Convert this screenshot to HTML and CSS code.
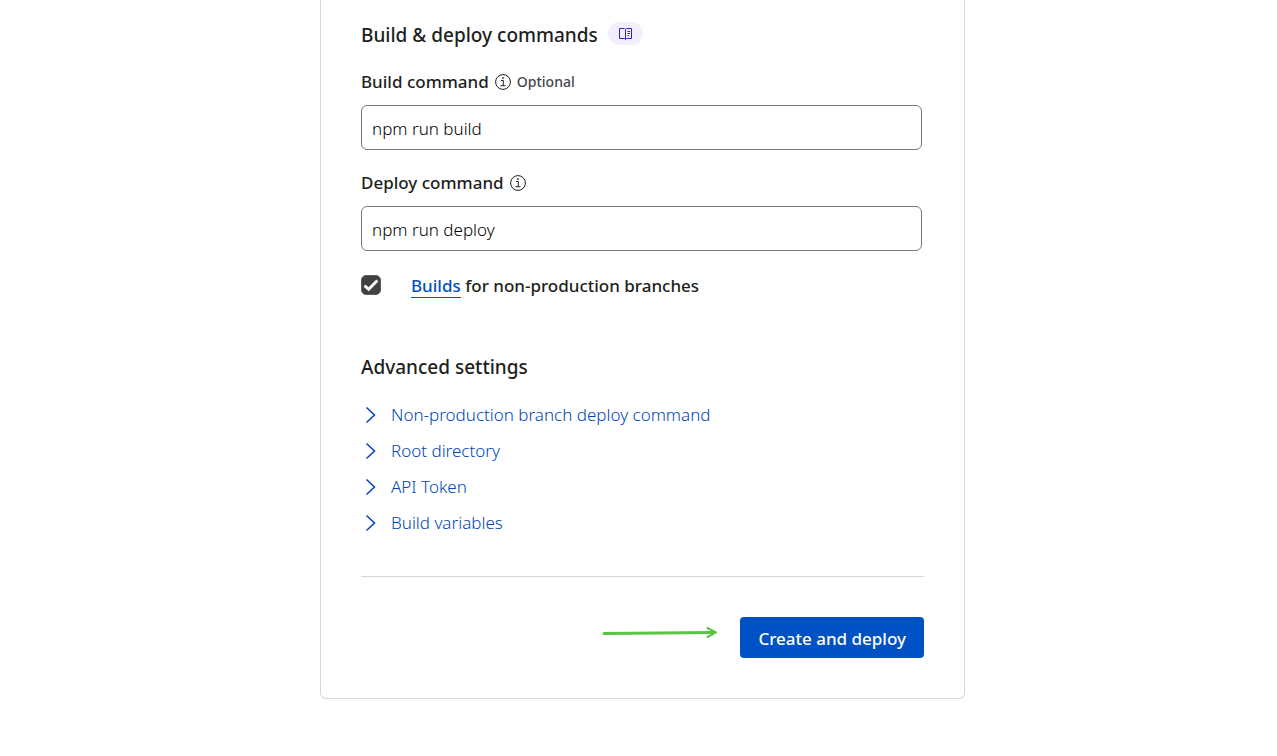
FILE: index.html
```html
<!DOCTYPE html>
<html lang="en">
<head>
    <meta charset="UTF-8">
    <meta name="viewport" content="width=device-width, initial-scale=1.0">
    <title>Create application</title>
    <link rel="stylesheet" href="styles.css">
</head>
<body>

    <form class="card">
        <div class="heading">
            <h2>Build &amp; deploy commands</h2>
            <a href="#docs" class="docs-badge" aria-label="Documentation">
                <svg width="13" height="13" viewBox="0 0 13 13" fill="none" stroke="currentColor">
                    <path d="M.5 1.500h5l1 1 1-1h5v10h-5l-1 1-1-1h-5zM6.500 2.500v10M8.500 4.500h2.500M8.500 6.500h2.500M8.500 8.500h1.500"/>
                </svg>
            </a>
        </div>

        <div class="field">
            <div class="field-label">
                <label for="buildCommand">Build command</label>
                <svg class="info" width="16" height="16" viewBox="0 0 16 16" fill="none" stroke="currentColor">
                    <circle cx="8" cy="8" r="7.4"/>
                    <path d="M6 6.500h2.300v5.200M5.500 11.700h5"/>
                    <circle cx="8" cy="4" r=".6" fill="currentColor" stroke-width=".6"/>
                </svg>
                <span class="optional">Optional</span>
            </div>
            <input type="text" id="buildCommand" value="npm run build">
        </div>

        <div class="field">
            <div class="field-label">
                <label for="deployCommand">Deploy command</label>
                <svg class="info" width="16" height="16" viewBox="0 0 16 16" fill="none" stroke="currentColor">
                    <circle cx="8" cy="8" r="7.4"/>
                    <path d="M6 6.500h2.300v5.200M5.500 11.700h5"/>
                    <circle cx="8" cy="4" r=".6" fill="currentColor" stroke-width=".6"/>
                </svg>
            </div>
            <input type="text" id="deployCommand" value="npm run deploy">
        </div>

        <div class="check-row">
            <span class="check">
                <input type="checkbox" id="branchBuilds" checked>
                <svg class="tick" width="20" height="20" viewBox="0 0 20 20" fill="none" stroke="currentColor" stroke-width="2.8">
                    <path d="M3.500 10.600l4.200 3.700 8.600-8.800"/>
                </svg>
            </span>
            <label for="branchBuilds"><a href="#builds">Builds</a> for non-production branches</label>
        </div>

        <h2 class="advanced-title">Advanced settings</h2>
        <div class="advanced">
            <button type="button">
                <svg width="20" height="20" viewBox="0 0 20 20" fill="none" stroke="currentColor" stroke-width="1.5"><path d="M5.500 2.500l8 7.500-8 7.500"/></svg>
                Non-production branch deploy command
            </button>
            <button type="button">
                <svg width="20" height="20" viewBox="0 0 20 20" fill="none" stroke="currentColor" stroke-width="1.5"><path d="M5.500 2.500l8 7.500-8 7.500"/></svg>
                Root directory
            </button>
            <button type="button">
                <svg width="20" height="20" viewBox="0 0 20 20" fill="none" stroke="currentColor" stroke-width="1.5"><path d="M5.500 2.500l8 7.500-8 7.500"/></svg>
                API Token
            </button>
            <button type="button">
                <svg width="20" height="20" viewBox="0 0 20 20" fill="none" stroke="currentColor" stroke-width="1.5"><path d="M5.500 2.500l8 7.500-8 7.500"/></svg>
                Build variables
            </button>
        </div>

        <div class="actions">
            <svg class="arrow" width="116" height="14" viewBox="0 0 116 14" fill="none" stroke="currentColor" stroke-linecap="round" stroke-linejoin="round">
                <path d="M2 8.400L111 7.400" stroke-width="3"/>
                <path d="M105.500 3l8.500 4.300-8.500 4.700" stroke-width="2"/>
            </svg>
            <button type="submit" class="submit">Create and deploy</button>
        </div>
    </form>

</body>
</html>
```
FILE: styles.css
```css
* {
    box-sizing: border-box;
}
body {
    margin: 0;
    padding-left: 8px;
    background-color: #fff;
    color: #1d1f20;
    font-family: "Segoe UI", "Noto Sans", "Open Sans", sans-serif;
    font-size: 17px;
    line-height: 24px;
}
.card {
    max-width: 645px;
    margin: 0 auto;
    padding: 20px 40px 40px;
    border: 1px solid #d5d7d8;
    border-top: 0;
    border-radius: 0 0 6px 6px;
}
h2 {
    margin: 0;
    font-size: 19px;
    font-weight: 500;
    line-height: 30px;
}
.heading {
    display: flex;
    align-items: center;
    gap: 10px;
    margin-bottom: 20px;
}
.docs-badge {
    display: flex;
    align-items: center;
    justify-content: center;
    width: 35px;
    height: 23px;
    margin-bottom: 3px;
    border-radius: 12px;
    background-color: #f2f0ff;
    color: #3b1bd6;
}
.field {
    margin: 0 2px 21px 0;
}
.field-label {
    display: flex;
    align-items: center;
    margin-bottom: 11px;
}
.field-label label, .check-row label {
    font-weight: 500;
}
.info {
    margin: 0 6px;
}
.optional {
    color: #43474a;
    font-size: 14px;
    font-weight: 500;
}
.field input {
    display: block;
    width: 100%;
    height: 45px;
    padding: 2px 10px 0;
    border: 1px solid #76797b;
    border-radius: 6px;
    background-color: #fff;
    color: #000;
    font: inherit;
    font-weight: 300;
}
.check-row {
    display: flex;
    gap: 30px;
    margin: 23px 0 54px;
}
.check {
    position: relative;
    width: 20px;
    height: 20px;
    margin-top: 1px;
}
.check input {
    display: block;
    width: 20px;
    height: 20px;
    margin: 0;
    border: 1px solid #76797b;
    border-radius: 5px;
    appearance: none;
}
.check input:checked {
    border-color: #5c5e5e;
    background-color: #404242;
}
.tick {
    display: none;
    position: absolute;
    top: 0;
    left: 0;
    color: #fff;
    pointer-events: none;
}
.check input:checked + .tick {
    display: block;
}
.check-row a {
    border-bottom: 1px solid #0051c3;
    color: #0051c3;
    text-decoration: none;
}
.advanced-title {
    margin-bottom: 15px;
}
.advanced {
    display: flex;
    flex-direction: column;
    align-items: flex-start;
    padding-bottom: 35px;
    border-bottom: 1px solid #d5d7d8;
}
.advanced button {
    display: flex;
    align-items: center;
    gap: 10px;
    height: 36px;
    padding: 0;
    border: 0;
    background: none;
    color: #0045b5;
    font: inherit;
    font-weight: 300;
    cursor: pointer;
}
.actions {
    display: flex;
    align-items: center;
    justify-content: flex-end;
    gap: 22px;
    padding-top: 40px;
}
.arrow {
    margin-bottom: 11px;
    color: #5bc446;
}
.submit {
    height: 41px;
    padding: 2px 18px 0;
    border: 0;
    border-radius: 4px;
    background-color: #0051c3;
    color: #fff;
    font: inherit;
    font-weight: 500;
    cursor: pointer;
}
```
